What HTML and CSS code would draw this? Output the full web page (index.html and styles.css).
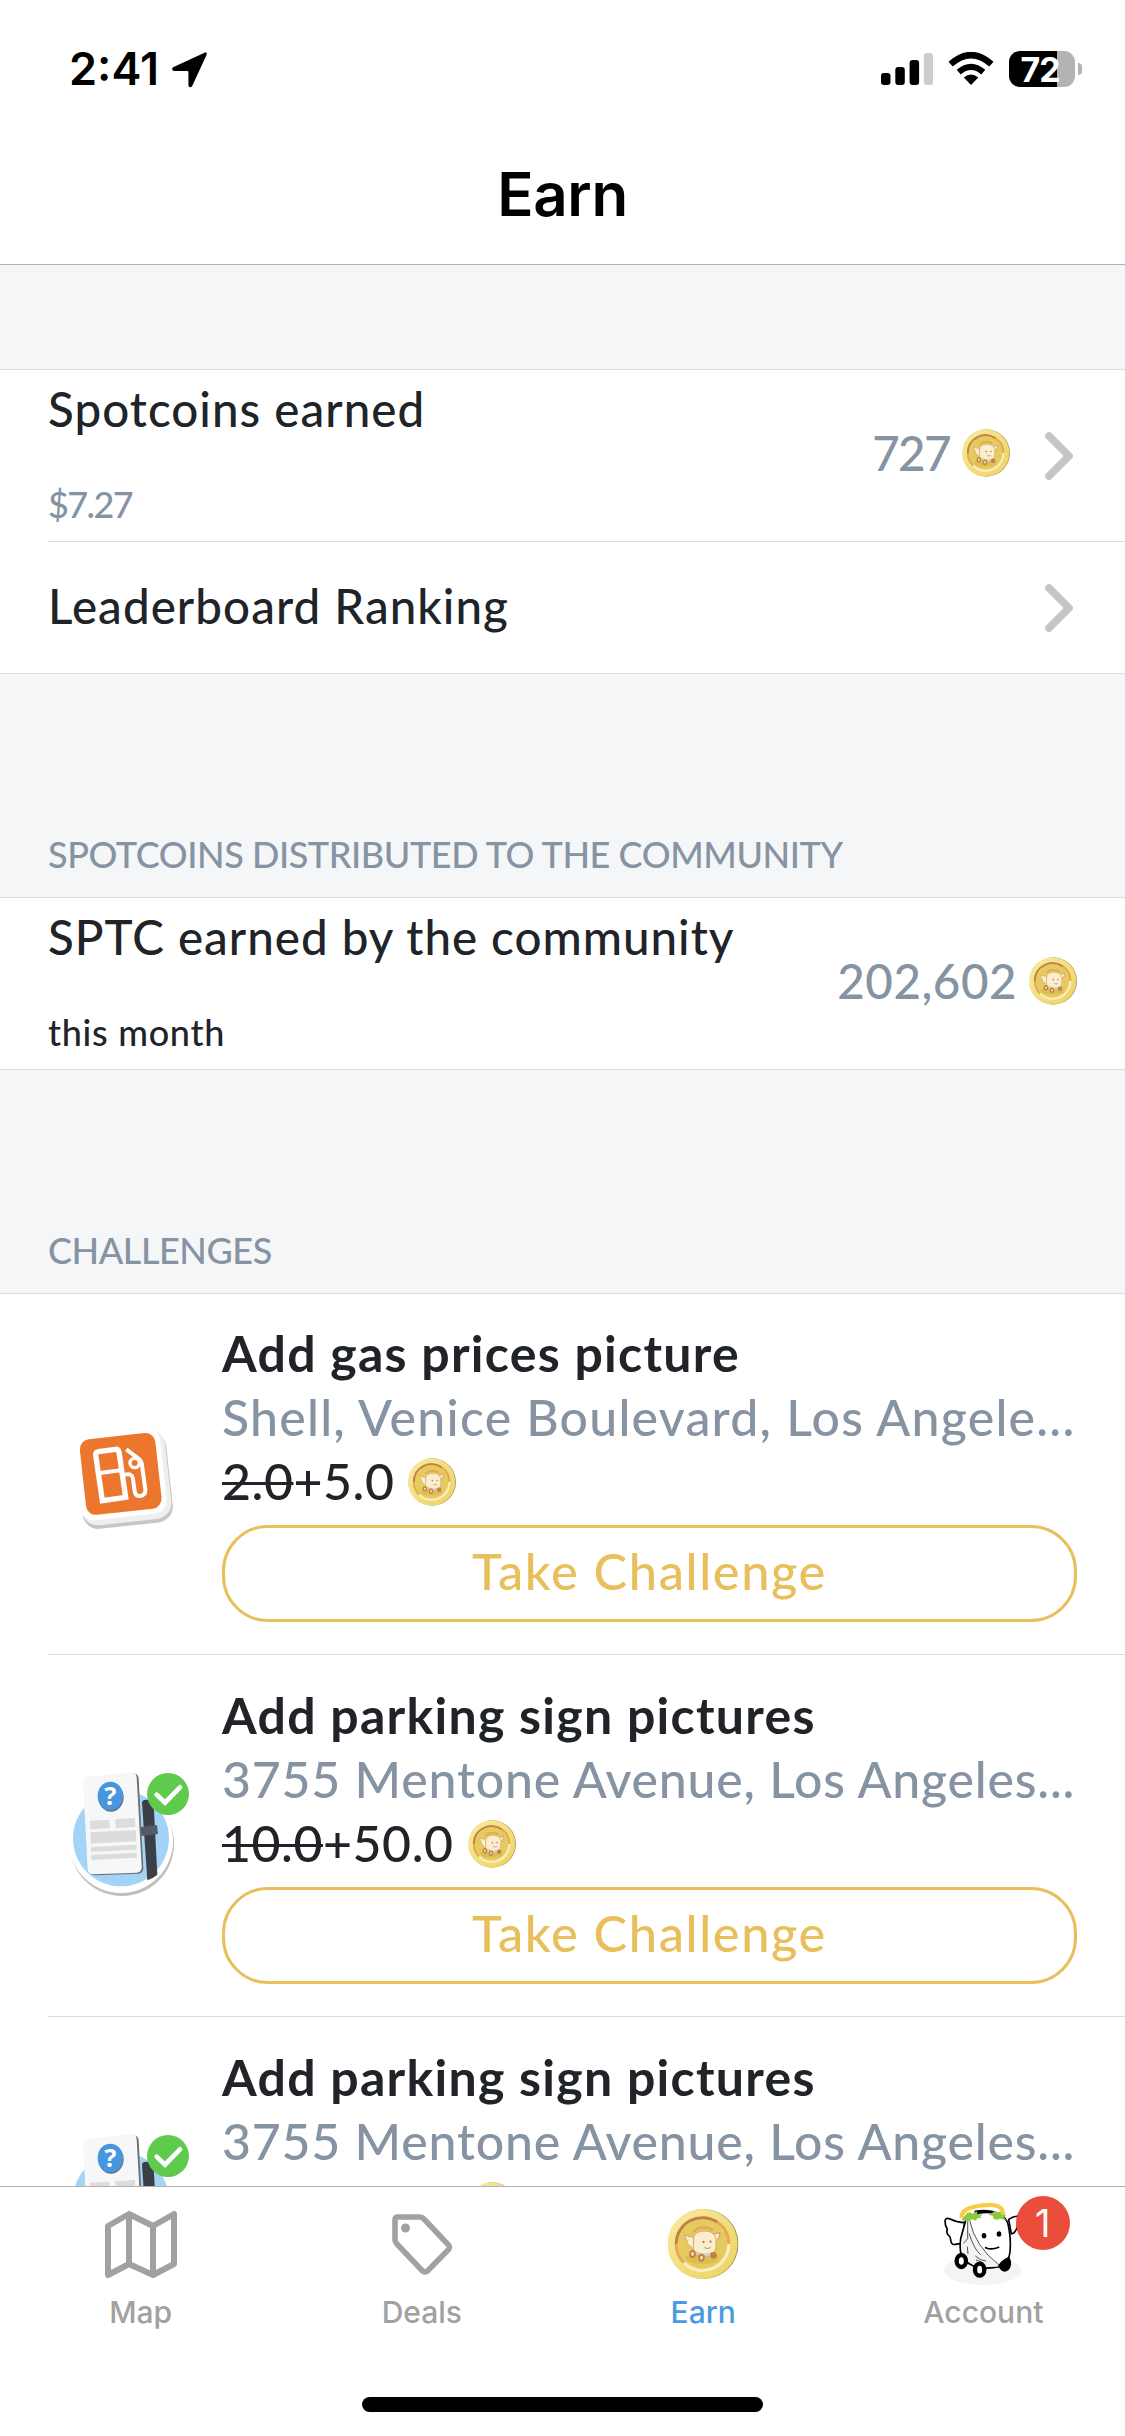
FILE: index.html
```html
<!DOCTYPE html>
<html lang="en">
<head>
<meta charset="utf-8">
<title>Earn</title>
<link rel="stylesheet" href="styles.css">
</head>
<body>
<svg class="sprite" aria-hidden="true">
  <symbol id="coin" viewBox="0 0 213 210">
    <circle cx="108" cy="105" r="105" fill="#a98a52"/>
    <circle cx="105" cy="105" r="105" fill="url(#coin-face)"/>
    <circle cx="105" cy="105" r="74" fill="#e5ca5f"/>
    <g fill="none" stroke-width="9">
      <path d="M26 105A79 79 0 0 1 150 40" stroke="#c58143"/>
      <path d="M150 40A79 79 0 0 1 184 105" stroke="#e6a850"/>
      <path d="M184 105A79 79 0 0 1 49 161" stroke="#faedc0"/>
      <path d="M49 161A79 79 0 0 1 26 105" stroke="#e6a850"/>
    </g>
    <ellipse cx="104" cy="148" rx="50" ry="17" fill="#dcbd51"/>
    <path d="M79 70C85 52 128 52 135 65" fill="none" stroke="#e6a850" stroke-width="8"/>
    <path d="M139 76C145 73 150 73 157 71C158 80 154 84 152 88C151 93 147 96 144 101Z" fill="#fbeed0" stroke="#c99050" stroke-width="3" stroke-linejoin="round"/>
    <path d="M78 84C68 84 60 82 53 77C52 88 56 92 59 95C58 103 62 106 66 109C69 114 73 119 81 118Z" fill="#fbeed0" stroke="#d8a35f" stroke-width="3" stroke-linejoin="round"/>
    <path d="M79 82C84 70 98 66 112 66C130 66 142 74 145 90C147 105 146 124 138 136C129 143 108 146 90 138C80 133 77 124 78 110Z" fill="#fbeed0" stroke="#dba764" stroke-width="3"/>
    <path d="M80 122C92 134 126 139 142 124C141 132 138 138 130 140C112 145 92 142 84 134Z" fill="#d3cdb2"/>
    <circle cx="108" cy="99" r="3.5" fill="#c58143"/><circle cx="129" cy="98" r="3.5" fill="#c58143"/>
    <path d="M111 116Q120 121 129 116" fill="none" stroke="#c58143" stroke-width="3"/>
    <circle cx="138" cy="139" r="10" fill="#c58143"/>
    <g fill="#f7e6b4" stroke="#c58143" stroke-width="6"><ellipse cx="75" cy="135" rx="7" ry="9"/><ellipse cx="102" cy="146" rx="7" ry="9"/></g>
  </symbol>
  <linearGradient id="coin-face" x1="0" y1="0" x2="1" y2="1"><stop offset="0" stop-color="#f8eba2"/><stop offset="1" stop-color="#ecd25e"/></linearGradient>
  <symbol id="chevron" viewBox="0 0 28 48">
    <path d="M4 4L24 24L4 44" fill="none" stroke="#c5c5c7" stroke-width="7.6" stroke-linecap="round" stroke-linejoin="round"/>
  </symbol>
  <symbol id="parking" viewBox="24 0 522 510">
    <circle cx="246" cy="282" r="156" fill="#bfbfbf"/>
    <circle cx="243" cy="273" r="156" fill="#fff"/>
    <circle cx="243" cy="265" r="144" fill="#a3d3f7"/>
    <path d="M306 158Q307 149 318 149L331 151Q340 153 341 164L352 374Q338 386 322 391Z" fill="#3a4045"/>
    <path d="M154 84L279 69Q294 70 296 84L310 355Q310 369 296 371L165 376Q148 376 146 361Z" fill="#6f6f6f"/>
    <path d="M146 80L272 66Q288 65 290 81L305 350Q306 366 291 368L160 373Q144 373 143 358L129 97Q129 82 146 80Z" fill="#f5f7f9"/>
    <path d="M302 231L351 225L354 252L304 258Z" fill="#545b68"/>
    <g fill="#dcdcdc"><path d="M150 212L208 209L210 235L151 238ZM225 208L285 204L286 231L228 235ZM151 247L287 240L289 274L153 281ZM153 291L290 284V299L153 305ZM153 315L290 308V323L154 330Z"/></g>
    <ellipse cx="213" cy="142" rx="38" ry="43" fill="#6d6d6d"/>
    <ellipse cx="211" cy="138" rx="38" ry="43" fill="#4697e0"/>
    <text x="211" y="165" text-anchor="middle" class="pad-mark">?</text>
    <circle cx="384" cy="132" r="63" fill="#60ca4d"/>
    <path d="M350 134L375 158L420 112" fill="none" stroke="#fff" stroke-width="14" stroke-linecap="round"/>
  </symbol>
</svg>

<header class="header">
  <div class="status">
    <div class="status-left">
      <span class="clock">2:41</span>
      <svg class="location" viewBox="0 0 35 36"><path d="M32.5.8L1.6 15C-.6 16-.2 19 2.2 19H15.4Q16.4 19 16.4 20V33C16.4 35.600 19.300 36 20.300 33.800L34.500 3C35.300 1 34.200 0 32.500.8Z"/></svg>
    </div>
    <div class="status-right">
      <svg class="signal" viewBox="0 0 52 32"><rect y="20" width="9.500" height="12" rx="3"/><rect x="14.300" y="14" width="9.500" height="18" rx="3"/><rect x="28.600" y="7" width="9.500" height="25" rx="3"/><rect x="42.800" width="9.200" height="32" rx="3" fill="#ccc"/></svg>
      <svg class="wifi" viewBox="0 0 46 33"><path d="M23 33L15.800 25.500Q23 19.500 30.200 25.500Z"/><path d="M10.700 20.200Q23 9.500 35.300 20.200" fill="none" stroke="#000" stroke-width="6.200"/><path d="M2.600 12.200Q23-6 43.400 12.200" fill="none" stroke="#000" stroke-width="6.400"/></svg>
      <div class="battery"><span class="battery-body">72</span><span class="battery-nub"></span></div>
    </div>
  </div>
  <h1 class="title">Earn</h1>
</header>

<main class="content">
  <section class="group group-summary">
    <div class="row row-tall">
      <div class="row-text"><span class="row-title">Spotcoins earned</span><span class="row-sub money">$7.27</span></div>
      <div class="row-value"><span class="amount amount-own">727</span><svg class="coin"><use href="#coin"/></svg><svg class="chevron"><use href="#chevron"/></svg></div>
    </div>
    <div class="divider"></div>
    <div class="row row-short">
      <span class="row-title">Leaderboard Ranking</span>
      <svg class="chevron"><use href="#chevron"/></svg>
    </div>
  </section>

  <h2 class="heading">SPOTCOINS DISTRIBUTED TO THE COMMUNITY</h2>
  <section class="group">
    <div class="row row-tall">
      <div class="row-text"><span class="row-title row-title-long">SPTC earned by the community</span><span class="row-sub">this month</span></div>
      <div class="row-value"><span class="amount">202,602</span><svg class="coin"><use href="#coin"/></svg></div>
    </div>
  </section>

  <h2 class="heading">CHALLENGES</h2>
  <section class="challenges">
    <article class="challenge">
      <svg class="challenge-icon gas" viewBox="27 4 522 450">
        <g transform="rotate(-6.300 244 225)">
          <rect x="118" y="111" width="272" height="272" rx="48" fill="#c6c6c6"/>
          <rect x="117" y="100" width="270" height="272" rx="48" fill="#efefef"/>
          <rect x="112" y="94" width="262" height="262" rx="42" fill="#fff"/>
          <rect x="131" y="112" width="228" height="228" rx="30" fill="#ed762f"/>
        </g>
        <g fill="none" stroke="#fff">
          <path d="M190 306L170 169Q169 160 178 159L230 152Q238 151 240 160L260 296Z" stroke-width="16"/>
          <path d="M178 224L250 214" stroke-width="12"/>
          <circle cx="287" cy="193" r="14" stroke-width="10"/>
          <path d="M262 152L300 181Q308 187 309 200L319 273Q320 290 304 292Q290 293 287 278L282 240Q279 223 258 228" stroke-width="12"/>
        </g>
      </svg>
      <div class="challenge-body">
        <h3 class="challenge-title">Add gas prices picture</h3>
        <p class="challenge-place place-business">Shell, Venice Boulevard, Los Angele...</p>
        <p class="challenge-reward"><span><s>2.0</s>+5.0</span><svg class="coin"><use href="#coin"/></svg></p>
        <button class="take">Take Challenge</button>
      </div>
    </article>
    <div class="divider"></div>
    <article class="challenge challenge-next">
      <svg class="challenge-icon parking"><use href="#parking"/></svg>
      <div class="challenge-body">
        <h3 class="challenge-title">Add parking sign pictures</h3>
        <p class="challenge-place">3755 Mentone Avenue, Los Angeles...</p>
        <p class="challenge-reward"><span><s>10.0</s>+50.0</span><svg class="coin"><use href="#coin"/></svg></p>
        <button class="take">Take Challenge</button>
      </div>
    </article>
    <div class="divider"></div>
    <article class="challenge challenge-next">
      <svg class="challenge-icon parking"><use href="#parking"/></svg>
      <div class="challenge-body">
        <h3 class="challenge-title">Add parking sign pictures</h3>
        <p class="challenge-place">3755 Mentone Avenue, Los Angeles...</p>
        <p class="challenge-reward"><span class="reward-clear"></span><svg class="coin"><use href="#coin"/></svg></p>
      </div>
    </article>
  </section>
</main>

<nav class="tabs">
  <a class="tab">
    <svg class="tab-icon" viewBox="0 0 72 90"><path d="M3 29L24 17V67L3 78ZM24 17L48 29V78L24 67M48 29L69 17V67L48 78" transform="translate(0 -3)" fill="none" stroke="#a1a1a1" stroke-width="6" stroke-linejoin="round"/></svg>
    <span>Map</span>
  </a>
  <a class="tab">
    <svg class="tab-icon" viewBox="0 0 72 90"><path d="M12 17H34Q36 17 38 19L62 44.500Q65 47 62 50L42 70.500Q39 73 36 70.500L11 44Q9 42 9 40V20Q9 17 12 17Z" fill="none" stroke="#a1a1a1" stroke-width="5.600"/><circle cx="19.500" cy="28" r="4.500" fill="#a1a1a1"/></svg>
    <span>Deals</span>
  </a>
  <a class="tab tab-active">
    <svg class="tab-icon" viewBox="0 0 72 90"><use href="#coin" x="0.500" y="9" width="71" height="70"/></svg>
    <span>Earn</span>
  </a>
  <a class="tab">
    <svg class="tab-icon mascot" viewBox="42 60 240 270">
      <ellipse cx="158" cy="272" rx="116" ry="43" fill="#f4f4f5"/>
      <g stroke="#000" stroke-width="5" stroke-linejoin="round" fill="#fff">
        <path d="M236 118Q250 108 266 108L262 140Q256 160 244 162Z"/>
        <path d="M104 128Q82 128 62 118Q46 110 45 124Q45 138 52 147Q48 160 56 166Q62 170 62 180Q64 196 76 193L94 190Z"/>
        <path d="M108 118Q130 96 172 97Q224 97 234 132Q244 176 240 216Q234 262 190 263Q130 270 102 238Q86 222 92 176Z"/>
      </g>
      <path d="M119 121Q134 198 208 256Q180 264 140 260Q96 244 93 190Z" fill="#f2f3f5"/>
      <g fill="none" stroke="#000" stroke-width="2"><path d="M119 121Q134 198 208 256M113 124V176L101 190M117 160Q132 208 152 224M112 200L114 222M136 228Q150 242 168 243M138 240L160 248"/></g>
      <path d="M95 114C92 92 118 80 158 76C202 71 219 80 220 104" fill="none" stroke="#f8cc45" stroke-width="13"/>
      <path d="M134 96Q164 88 198 98" fill="none" stroke="#000" stroke-width="7"/>
      <path d="M94 120L104 108L112 98L120 97L128 102L140 94L142 102L158 104L150 110L156 114L142 115L138 122L126 118L116 124ZM174 104L186 100L194 92L204 97L212 95L214 102L228 106L222 112L229 121L210 116L200 120L188 114L190 108Z" fill="#8fc93f"/>
      <ellipse cx="162" cy="167" rx="7" ry="8"/><ellipse cx="207" cy="162" rx="7" ry="8"/>
      <path d="M167 203Q185 211 206 202" fill="none" stroke="#000" stroke-width="5" stroke-linecap="round"/>
      <path d="M204 258Q212 240 238 230Q250 254 236 270Q218 284 204 258Z"/>
      <g fill="#fff" stroke="#000" stroke-width="13"><ellipse cx="94" cy="243" rx="14" ry="18"/><ellipse cx="149" cy="269" rx="14" ry="18"/></g>
    </svg>
    <span class="badge">1</span>
    <span class="label-account">Account</span>
  </a>
</nav>
<div class="home"><span class="home-bar"></span></div>
</body>
</html>
```

FILE: styles.css
```css
* { box-sizing: border-box; margin: 0; padding: 0; }

body {
  display: flex;
  flex-direction: column;
  height: 2436px;
  background: #fff;
  color: #202328;
  font-family: Lato, "Open Sans", sans-serif;
  font-weight: 500;
  overflow: hidden;
}

svg { display: block; flex: none; }
.sprite { position: absolute; width: 0; height: 0; }

/* Header */
.header {
  flex: none;
  height: 265px;
  border-bottom: 1px solid #b0b0b2;
  font-family: Inter, sans-serif;
  color: #000;
}
.status {
  display: flex;
  justify-content: space-between;
  height: 138px;
  padding: 51px 43px 0 69px;
}
.status-left, .status-right { display: flex; align-items: flex-start; }
.clock { font-size: 45px; font-weight: 600; line-height: 36px; }
.location { width: 35px; height: 36px; margin: 1px 0 0 13px; }
.signal { width: 52px; height: 32px; margin: 2px 15px 0 0; }
.wifi { width: 46px; height: 33px; margin: 1px 15px 0 0; }
.battery { display: flex; align-items: center; gap: 3px; }
.battery-body {
  width: 66px;
  height: 36px;
  border-radius: 11px;
  background: linear-gradient(90deg, #000 48px, #b3b3b3 48px);
  color: #fff;
  font-size: 34px;
  font-weight: 700;
  line-height: 37px;
  text-align: center;
  padding-right: 4px;
  letter-spacing: -1px;
}
.battery-nub { width: 4px; height: 12px; border-radius: 0 4px 4px 0; background: #b3b3b3; }
.title { font-size: 60px; font-weight: 600; line-height: 112px; letter-spacing: -0.3px; text-align: center; }

/* Grouped lists */
.content { flex: 1; min-height: 0; overflow: hidden; background: #f5f6f8; }
.group, .challenges { background: #fff; border-top: 1px solid #dcdddf; border-bottom: 1px solid #dcdddf; }
.group-summary { margin-top: 104px; }
.row { display: flex; justify-content: space-between; align-items: center; padding: 0 48px; }
.row-tall { height: 171px; align-items: flex-start; padding-top: 11px; }
.row-short { height: 131px; }
.row-short .row-title { padding-bottom: 3px; }
.row-text { display: flex; flex-direction: column; gap: 45px; }
.row-title { font-size: 47.5px; line-height: 56px; letter-spacing: 1.05px; }
.row-title-long { letter-spacing: 1px; }
.row-sub { font-size: 36px; line-height: 44px; letter-spacing: 0.7px; }
.money { color: #8593a3; letter-spacing: -1.6px; }
.row-value { display: flex; align-items: center; height: 56px; margin-top: 44px; color: #8593a3; }
.amount { font-size: 47.5px; line-height: 56px; letter-spacing: 0.5px; }
.amount-own { letter-spacing: -1.6px; }
.coin { width: 48px; height: 48px; margin-left: 12px; }
.chevron { width: 28px; height: 48px; margin-right: 4px; }
.row-value .chevron { margin: 6px 4px 0 35px; }
.divider { height: 1px; margin-left: 48px; background: #dcdddf; }

.heading {
  display: flex;
  align-items: flex-end;
  height: 223px;
  padding: 0 48px 21px;
  color: #8593a3;
  font-size: 36px;
  font-weight: 500;
  line-height: 44px;
  letter-spacing: -0.43px;
}

/* Challenges */
.challenge { display: flex; padding: 27px 48px 32px; }
.challenge-next { padding-top: 28px; }
.challenge-icon { width: 174px; }
.gas { height: 150px; margin-top: 79px; }
.parking { height: 170px; margin-top: 67px; }
.pad-mark { font: 700 76px "Noto Sans", sans-serif; letter-spacing: 0; fill: #fff; }
.challenge-body { flex: 1; min-width: 0; font-size: 50px; line-height: 64px; }
.challenge-title { font-size: 50px; font-weight: 700; letter-spacing: 1.28px; }
.challenge-place { color: #8593a3; letter-spacing: 0.79px; white-space: nowrap; }
.place-business { letter-spacing: 1.24px; }
.challenge-reward { display: flex; align-items: center; height: 64px; letter-spacing: 0.55px; }
.challenge-reward .coin { margin: 1px 0 0 14px; }
.challenge-reward s { text-decoration-thickness: 3px; }
.reward-clear { width: 232px; }
.take {
  display: block;
  width: 855px;
  height: 97px;
  margin-top: 12px;
  padding-bottom: 6px;
  border: 3px solid #e9bf5c;
  border-radius: 46px;
  background: none;
  color: #e9bf5c;
  font: 500 50.5px/80px Lato, sans-serif;
  letter-spacing: 1.6px;
}

/* Tab bar */
.tabs {
  flex: none;
  display: flex;
  height: 169px;
  border-top: 1px solid #b0b0b2;
  color: #a1a1a1;
  font: 500 30px/36px Inter, sans-serif;
}
.tab { position: relative; flex: 1; display: flex; flex-direction: column; align-items: center; padding-top: 13px; gap: 4px; }
.tab-active { color: #4a9ae3; }
.label-account { margin-right: 2px; }
.tab-icon { width: 72px; height: 90px; }
.mascot { width: 80px; }
.badge {
  position: absolute;
  left: 172px;
  top: 9px;
  width: 54px;
  height: 54px;
  border-radius: 50%;
  background: #eb4d3d;
  color: #fff;
  font-size: 38px;
  font-weight: 400;
  line-height: 54px;
  text-align: center;
}
.home { flex: none; height: 81px; padding-top: 42px; }
.home-bar { display: block; width: 401px; height: 15px; margin: 0 auto; border-radius: 8px; background: #000; }
```
